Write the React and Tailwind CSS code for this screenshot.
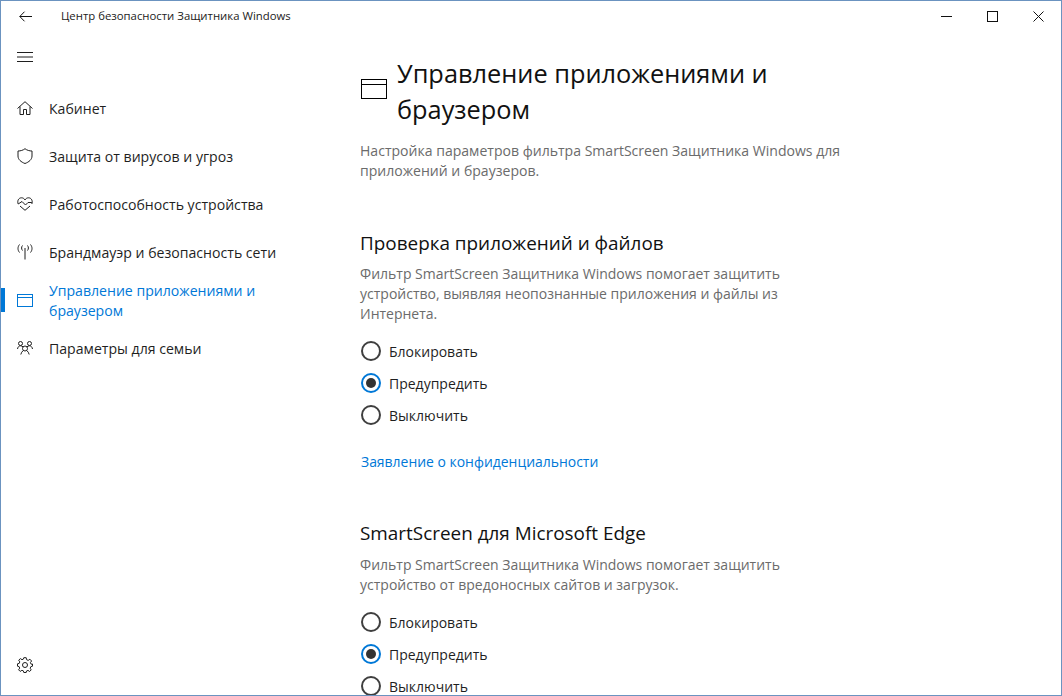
import React from "react";

const font = { fontFamily: '"Open Sans", "Noto Sans", sans-serif' };

function Ico({ children, className = "", w = 16, h = 16 }) {
  return (
    <svg width={w} height={h} viewBox={`0 0 ${w} ${h}`} fill="none" stroke="currentColor" strokeWidth="1" className={className}>
      {children}
    </svg>
  );
}

const HomeI = () => (
  <Ico h={14}>
    <path d="M0.5 7.5 L8 0.7 L15.5 7.5 M3 5.5 V13.5 H6.5 V8.5 H9.5 V13.5 H13 V5.5" />
  </Ico>
);
const ShieldI = () => (
  <Ico>
    <path d="M8 0.7 C6 2.3 3.5 3 1 3 V8 C1 11.5 4 14 8 15.5 C12 14 15 11.5 15 8 V3 C12.5 3 10 2.3 8 0.7 Z" />
  </Ico>
);
const HeartI = () => (
  <Ico h={14}>
    <path d="M3 9 L8 13.3 L13 9" />
    <path d="M1.2 7 C0 4 1.5 0.8 4.5 0.8 C6 0.8 7.3 1.6 8 3 C8.7 1.6 10 0.8 11.5 0.8 C14.5 0.8 16 4 14.8 7" />
    <path d="M1.2 7 L5 4.5 L8.5 8 L11 5.5 H14.8" />
  </Ico>
);
const AntennaI = () => (
  <Ico>
    <path d="M8 4 V15.5" />
    <path d="M5.5 1.5 C4.3 3 4.3 5 5.5 6.5 M10.5 1.5 C11.7 3 11.7 5 10.5 6.5 M2.5 0.5 C0.5 3 0.5 6 2.5 8.5 M13.5 0.5 C15.5 3 15.5 6 13.5 8.5" />
  </Ico>
);
const WindowI = ({ w = 16, h = 13, bar = 3.5 }) => (
  <Ico w={w} h={h}>
    <rect x="0.5" y="0.5" width={w - 1} height={h - 1} />
    <path d={`M0.5 ${bar} H${w - 0.5}`} />
  </Ico>
);
const FamilyI = () => (
  <Ico h={14}>
    <circle cx="8" cy="7.5" r="2.5" />
    <circle cx="3.5" cy="2.5" r="2" />
    <circle cx="12.5" cy="2.5" r="2" />
    <path d="M0.5 8 C0.8 6 2 4.8 3.5 4.8 C4.6 4.8 5.4 5.2 6.2 6 M15.5 8 C15.2 6 14 4.8 12.5 4.8 C11.4 4.8 10.6 5.2 9.8 6" />
    <path d="M3.8 13.5 C4.2 11.8 5 10.5 6.2 9.6 M12.2 13.5 C11.8 11.8 11 10.5 9.8 9.6" />
  </Ico>
);
const GearI = () => (
  <Ico>
    <circle cx="8" cy="8" r="2.5" />
    <path d="M6.8 0.7 H9.2 L9.6 2.7 L11.2 3.4 L12.9 2.2 L14.6 4 L13.4 5.6 L14.1 7.2 L15.5 7 V9.2 L13.9 9.6 L13.2 11.2 L14.2 12.9 L12.6 14.5 L11 13.4 L9.5 14 L9.2 15.5 H6.8 L6.4 13.9 L4.9 13.3 L3.2 14.4 L1.6 12.8 L2.7 11.1 L2.1 9.6 L0.5 9.2 V6.8 L2.2 6.4 L2.8 4.9 L1.7 3.2 L3.4 1.6 L5 2.7 L6.4 2.1 Z" />
  </Ico>
);

function NavItem({ icon, children, active }) {
  return (
    <div className={`relative flex items-center min-h-12 py-[3px] ${active ? "text-[#0078d7]" : "text-[#1f1f1f]"}`}>
      {active && <div className="absolute left-0 top-[12px] w-[4px] h-[24px] bg-[#0078d7]" />}
      <div className="w-12 flex justify-center shrink-0">{icon}</div>
      <div className="text-[14.1px] leading-[20px] w-[235px] pt-[2px]">{children}</div>
    </div>
  );
}

function Radio({ label, checked }) {
  return (
    <div className="flex items-center h-8 pl-[1px]">
      <div className={`w-5 h-5 rounded-full border-2 flex items-center justify-center ${checked ? "border-[#0078d7]" : "border-[#3f3f3f]"}`}>
        {checked && <div className="w-[10px] h-[10px] rounded-full bg-[#333333]" />}
      </div>
      <span className="ml-2 text-[14px] text-[#1f1f1f]">{label}</span>
    </div>
  );
}

function Section({ title, children, link, className = "", pClass = "" }) {
  return (
    <section className={className}>
      <h2 className="text-[18.9px] leading-[28px] text-[#111111]">{title}</h2>
      <p className={`${pClass} text-[14px] leading-[20px] text-[#6b6b6b] w-[440px]`}>{children}</p>
      <div className="mt-[11px]">
        <Radio label="Блокировать" />
        <Radio label="Предупредить" checked />
        <Radio label="Выключить" />
      </div>
      {link && <div className="mt-[21px] pl-[1px] text-[13.95px] leading-5 text-[#0078d7]">{link}</div>}
    </section>
  );
}

export default function App() {
  return (
    <div style={font} className="w-[1062px] h-[696px] border border-[#6b93c0] bg-white overflow-hidden flex flex-col">
      <div className="h-[31px] flex items-center shrink-0 text-[#111111]">
        <div className="w-[60px] flex pl-[18px]">
          <Ico w={13} h={11}>
            <path d="M0.8 5.5 H13 M5.5 0.7 L0.8 5.5 L5.5 10.3" />
          </Ico>
        </div>
        <div className="text-[11.35px] text-[#222222] flex-1 pb-[2px]">Центр безопасности Защитника Windows</div>
        <div className="flex h-full">
          <div className="w-[46px] flex items-center justify-center">
            <Ico w={11} h={11}><path d="M0 5.5 H11" /></Ico>
          </div>
          <div className="w-[46px] flex items-center justify-center">
            <Ico w={11} h={11}><rect x="0.5" y="0.5" width="10" height="10" /></Ico>
          </div>
          <div className="w-[46px] flex items-center justify-center">
            <Ico w={11} h={11}><path d="M0.5 0.5 L10.5 10.5 M10.5 0.5 L0.5 10.5" /></Ico>
          </div>
        </div>
      </div>
      <div className="flex flex-1 min-h-0">
        <aside className="w-[359px] shrink-0 flex flex-col text-[#1f1f1f]">
          <div className="h-12 flex items-center pl-4 pt-[1px]">
            <Ico w={16} h={10}><path d="M0 0.5 H16 M0 5 H16 M0 9.5 H16" /></Ico>
          </div>
          <nav className="mt-[4px]">
            <NavItem icon={<HomeI />}>Кабинет</NavItem>
            <NavItem icon={<ShieldI />}>Защита от вирусов и угроз</NavItem>
            <NavItem icon={<HeartI />}>Работоспособность устройства</NavItem>
            <NavItem icon={<AntennaI />}>Брандмауэр и безопасность сети</NavItem>
            <NavItem icon={<WindowI />} active>Управление приложениями и браузером</NavItem>
            <NavItem icon={<FamilyI />}>Параметры для семьи</NavItem>
          </nav>
          <div className="mt-auto pl-4 pb-[22px]"><GearI /></div>
        </aside>
        <main className="flex-1 min-w-0">
          <div className="flex items-start mt-[23px]">
            <div className="w-[37px] pl-[1px] pt-[24px]"><WindowI w={26} h={20} bar={5.5} /></div>
            <h1 className="text-[25.35px] leading-[36px] text-[#111111] w-[420px]">Управление приложениями и браузером</h1>
          </div>
          <p className="mt-[14px] text-[14.05px] leading-[20px] text-[#6b6b6b] w-[500px]">
            Настройка параметров фильтра SmartScreen Защитника Windows для приложений и браузеров.
          </p>
          <Section className="mt-[48px]" pClass="mt-[7px]" title="Проверка приложений и файлов" link="Заявление о конфиденциальности">
            Фильтр SmartScreen Защитника Windows помогает защитить устройство, выявляя неопознанные приложения и файлы из Интернета.
          </Section>
          <Section className="mt-[47px]" pClass="mt-[8px]" title="SmartScreen для Microsoft Edge">
            Фильтр SmartScreen Защитника Windows помогает защитить устройство от вредоносных сайтов и загрузок.
          </Section>
        </main>
      </div>
    </div>
  );
}
